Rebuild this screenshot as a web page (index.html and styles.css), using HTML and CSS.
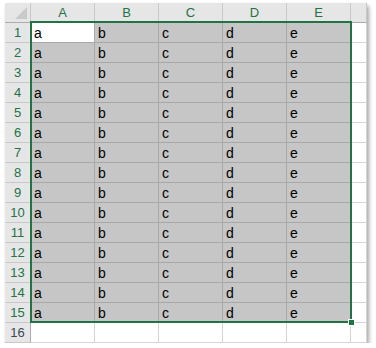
FILE: index.html
```html
<!DOCTYPE html>
<html lang="en">
<head>
    <meta charset="UTF-8">
    <title>Sheet selection</title>
    <link rel="stylesheet" href="styles.css">
</head>
<body>
    <div class="sheet">
        <!-- column headers -->
        <div class="corner"></div>
        <div class="col-head sel">A</div>
        <div class="col-head sel">B</div>
        <div class="col-head sel">C</div>
        <div class="col-head sel">D</div>
        <div class="col-head sel">E</div>
        <div class="col-head"></div>

        <div class="row-head sel">1</div><div class="cell active">a</div><div class="cell in">b</div><div class="cell in">c</div><div class="cell in">d</div><div class="cell in">e</div><div class="cell"></div>
        <div class="row-head sel">2</div><div class="cell in">a</div><div class="cell in">b</div><div class="cell in">c</div><div class="cell in">d</div><div class="cell in">e</div><div class="cell"></div>
        <div class="row-head sel">3</div><div class="cell in">a</div><div class="cell in">b</div><div class="cell in">c</div><div class="cell in">d</div><div class="cell in">e</div><div class="cell"></div>
        <div class="row-head sel">4</div><div class="cell in">a</div><div class="cell in">b</div><div class="cell in">c</div><div class="cell in">d</div><div class="cell in">e</div><div class="cell"></div>
        <div class="row-head sel">5</div><div class="cell in">a</div><div class="cell in">b</div><div class="cell in">c</div><div class="cell in">d</div><div class="cell in">e</div><div class="cell"></div>
        <div class="row-head sel">6</div><div class="cell in">a</div><div class="cell in">b</div><div class="cell in">c</div><div class="cell in">d</div><div class="cell in">e</div><div class="cell"></div>
        <div class="row-head sel">7</div><div class="cell in">a</div><div class="cell in">b</div><div class="cell in">c</div><div class="cell in">d</div><div class="cell in">e</div><div class="cell"></div>
        <div class="row-head sel">8</div><div class="cell in">a</div><div class="cell in">b</div><div class="cell in">c</div><div class="cell in">d</div><div class="cell in">e</div><div class="cell"></div>
        <div class="row-head sel">9</div><div class="cell in">a</div><div class="cell in">b</div><div class="cell in">c</div><div class="cell in">d</div><div class="cell in">e</div><div class="cell"></div>
        <div class="row-head sel">10</div><div class="cell in">a</div><div class="cell in">b</div><div class="cell in">c</div><div class="cell in">d</div><div class="cell in">e</div><div class="cell"></div>
        <div class="row-head sel">11</div><div class="cell in">a</div><div class="cell in">b</div><div class="cell in">c</div><div class="cell in">d</div><div class="cell in">e</div><div class="cell"></div>
        <div class="row-head sel">12</div><div class="cell in">a</div><div class="cell in">b</div><div class="cell in">c</div><div class="cell in">d</div><div class="cell in">e</div><div class="cell"></div>
        <div class="row-head sel">13</div><div class="cell in">a</div><div class="cell in">b</div><div class="cell in">c</div><div class="cell in">d</div><div class="cell in">e</div><div class="cell"></div>
        <div class="row-head sel">14</div><div class="cell in">a</div><div class="cell in">b</div><div class="cell in">c</div><div class="cell in">d</div><div class="cell in">e</div><div class="cell"></div>
        <div class="row-head sel">15</div><div class="cell in">a</div><div class="cell in">b</div><div class="cell in">c</div><div class="cell in">d</div><div class="cell in">e</div><div class="cell"></div>
        <div class="row-head">16</div><div class="cell"></div><div class="cell"></div><div class="cell"></div><div class="cell"></div><div class="cell"></div><div class="cell"></div>

        <!-- selection frame over A1:E15 -->
        <div class="selection"><span class="handle"></span></div>
    </div>
</body>
</html>
```

FILE: styles.css
```css
body {
    margin: 0;
    background-color: #ffffff;
    font-family: "Liberation Sans", Arial, sans-serif;
}

.sheet {
    display: grid;
    grid-template-columns: 26px repeat(5, 64px) 16px;
    grid-template-rows: 20px repeat(16, 20px);
    width: 362px;
    margin: 3px 0 0 5px;
    position: relative;
    background-color: #ffffff;
    box-shadow: 2px 3px 4px rgba(0, 0, 0, 0.35);
}

.sheet div {
    box-sizing: border-box;
}

.corner {
    background-color: #e6e6e6;
    border-right: 1px solid #c8c8c8;
    border-bottom: 1px solid #ababab;
    position: relative;
}

/* little triangle in the select-all box */
.corner::after {
    content: "";
    position: absolute;
    right: 3px;
    bottom: 3px;
    border-left: 12px solid transparent;
    border-bottom: 12px solid #c9c9c9;
}

.col-head {
    background-color: #e6e6e6;
    border-right: 1px solid #c8c8c8;
    border-bottom: 1px solid #ababab;
    font-size: 13px;
    line-height: 19px;
    text-align: center;
    color: #444444;
}

.row-head {
    background-color: #e6e6e6;
    border-right: 1px solid #ababab;
    border-bottom: 1px solid #c8c8c8;
    font-size: 13px;
    line-height: 19px;
    text-align: center;
    color: #3b4656;
}

.sel {
    color: #217346;
}

.cell {
    border-right: 1px solid #d4d4d4;
    border-bottom: 1px solid #d4d4d4;
    padding: 2px 0 0 3px;
    font-size: 14px;
    line-height: 17px;
    color: #000000;
}

.cell.in {
    background-color: #c6c6c6;
    border-color: #a8a8a8;
}

.cell.active {
    background-color: #ffffff;
    border-right-color: #a8a8a8;
    border-bottom-color: #a8a8a8;
}

/* green frame lies over A1:E15 */
.sheet .selection {
    position: absolute;
    left: 25px;
    top: 18px;
    width: 322px;
    height: 302px;
    border: 2px solid #217346;
    pointer-events: none;
}

.handle {
    position: absolute;
    right: -5px;
    bottom: -5px;
    width: 5px;
    height: 5px;
    background-color: #217346;
    border: 1px solid #ffffff;
}
```
